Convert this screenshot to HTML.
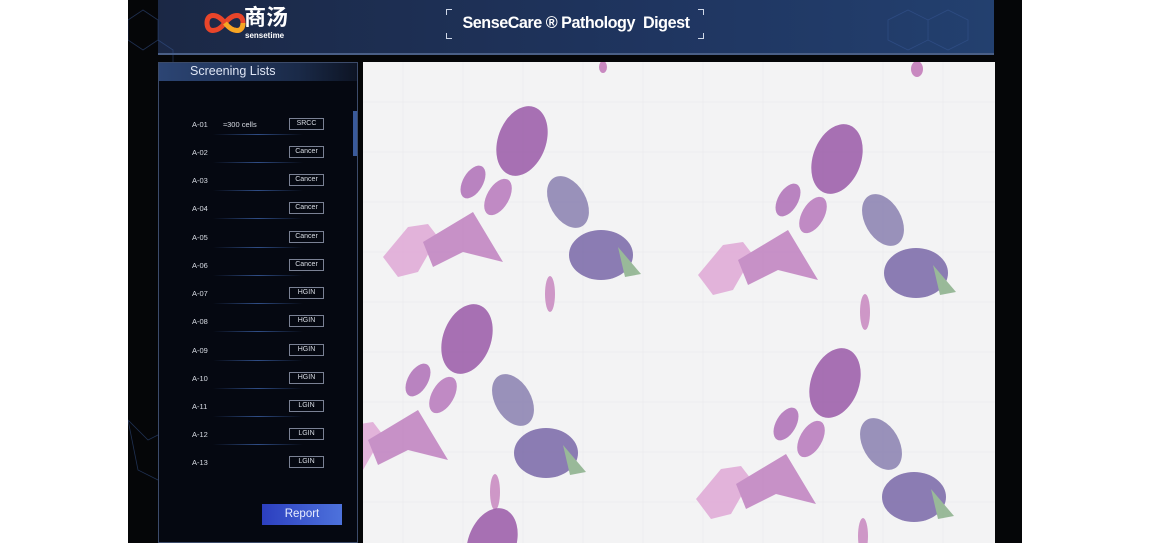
<!DOCTYPE html>
<html><head><meta charset="utf-8"><style>
*{margin:0;padding:0;box-sizing:border-box}
html,body{width:1150px;height:543px;overflow:hidden}
body{background:#fff;position:relative;font-family:"Liberation Sans",sans-serif}
.frame{position:absolute;left:128px;top:0;width:894px;height:543px;background:#050608}
.hdr{position:absolute;left:158px;top:0;width:836px;height:55px;background:linear-gradient(90deg,#1b2845,#1f3560 60%,#23406f);border-bottom:2px solid #4a5f86}
.title{position:absolute;left:448px;top:8px;width:256px;height:30px;color:#fff;font-weight:bold;font-size:17px;text-align:center;line-height:30px;letter-spacing:-0.5px;transform:scaleX(0.95)}
.br{position:absolute;width:6px;height:6px;border-color:#cfd8e8;border-style:solid}
.panel{position:absolute;left:158px;top:62px;width:200px;height:481px;background:#050811;border:1px solid #3c4b6a}
.ph{position:absolute;left:0;top:0;width:198px;height:18px;background:linear-gradient(90deg,#2c4574,#1a2a48 70%,#0d1424)}
.ph span{position:absolute;left:31px;top:1px;color:#dfe6f5;font-size:12.5px}
.row{position:absolute;left:0;width:200px;height:20px;color:#d8dce4;font-size:7.5px}
.row .id{position:absolute;left:34px;top:2px}
.row .c{position:absolute;left:65px;top:2px}
.row .t{position:absolute;left:131px;top:0;width:35px;height:12px;border:1px solid #7a8194;text-align:center;line-height:10px;font-size:7px}
.row .ln{position:absolute;left:55px;top:16px;width:90px;height:1px;background:linear-gradient(90deg,transparent,#2f4d86,transparent)}
.btn{position:absolute;left:262px;top:504px;width:80px;height:21px;background:linear-gradient(90deg,#2c3fbf,#4d72dc);color:#e8eeff;font-size:11.5px;text-align:center;line-height:21px}
.img{position:absolute;left:363px;top:62px;width:632px;height:481px;background:#f3f3f4;overflow:hidden}
</style></head><body>
<div class="frame"></div>
<div class="hdr"></div>
<svg style="position:absolute;left:128px;top:0" width="894" height="543">
<g stroke="#3a5a9a" stroke-width="0.8" fill="none" opacity="0.5">
<path d="M0 20 L15 10 L30 20 L30 40 L15 50 L0 40Z M30 40 L45 50 L45 70"/>
<path d="M760 20 L780 10 L800 20 L800 40 L780 50 L760 40Z M800 40 L820 50 L840 40 L840 20 L820 10 L800 20"/>
<path d="M0 420 L20 440 L40 430 L50 460 L30 480 L10 470Z"/>
</g>
</svg>
<div style="position:absolute;left:203px;top:9px">
<svg width="44" height="28"><path d="M4 14 C4 4,14 4,22 14 C30 24,40 24,40 14 C40 4,30 4,22 14 C14 24,4 24,4 14Z" fill="none" stroke="#e8452a" stroke-width="5"/><path d="M22 14 C30 24,40 24,40 14" fill="none" stroke="#f6a623" stroke-width="5"/></svg>
</div>
<div style="position:absolute;left:244px;top:6px;color:#fff;font-size:22px;font-weight:bold;font-family:'Liberation Sans','Noto Sans CJK SC',sans-serif;line-height:24px">商汤</div>
<div style="position:absolute;left:245px;top:31px;color:#fff;font-size:8px;font-weight:bold">sensetime</div>
<div class="title">SenseCare ® Pathology&nbsp; Digest</div>
<div class="br" style="left:446px;top:9px;border-width:1px 0 0 1px"></div>
<div class="br" style="left:446px;top:33px;border-width:0 0 1px 1px"></div>
<div class="br" style="left:698px;top:9px;border-width:1px 1px 0 0"></div>
<div class="br" style="left:698px;top:33px;border-width:0 1px 1px 0"></div>
<div class="panel"><div class="ph"><span>Screening Lists</span></div>
<div style="position:absolute;left:194px;top:48px;width:4px;height:45px;background:#3a5a9a"></div>
</div>
<div style="position:absolute;left:158px;top:112px;width:200px;height:380px">
<div class="row" style="top:6px"><span class="id">A-01</span><span class="c">≈300 cells</span><span class="t">SRCC</span><span class="ln"></span></div>
<div class="row" style="top:34px"><span class="id">A-02</span><span class="t">Cancer</span><span class="ln"></span></div>
<div class="row" style="top:62px"><span class="id">A-03</span><span class="t">Cancer</span><span class="ln"></span></div>
<div class="row" style="top:90px"><span class="id">A-04</span><span class="t">Cancer</span><span class="ln"></span></div>
<div class="row" style="top:119px"><span class="id">A-05</span><span class="t">Cancer</span><span class="ln"></span></div>
<div class="row" style="top:147px"><span class="id">A-06</span><span class="t">Cancer</span><span class="ln"></span></div>
<div class="row" style="top:175px"><span class="id">A-07</span><span class="t">HGIN</span><span class="ln"></span></div>
<div class="row" style="top:203px"><span class="id">A-08</span><span class="t">HGIN</span><span class="ln"></span></div>
<div class="row" style="top:232px"><span class="id">A-09</span><span class="t">HGIN</span><span class="ln"></span></div>
<div class="row" style="top:260px"><span class="id">A-10</span><span class="t">HGIN</span><span class="ln"></span></div>
<div class="row" style="top:288px"><span class="id">A-11</span><span class="t">LGIN</span><span class="ln"></span></div>
<div class="row" style="top:316px"><span class="id">A-12</span><span class="t">LGIN</span><span class="ln"></span></div>
<div class="row" style="top:344px"><span class="id">A-13</span><span class="t">LGIN</span></div>
</div>
<div class="btn">Report</div>
<div class="img">
<svg width="632" height="481" style="display:block">
<defs>
<g id="t" opacity="0.85">
<ellipse cx="159" cy="79" rx="24" ry="36" transform="rotate(20 159 79)" fill="#9a5aa8"/>
<ellipse cx="110" cy="120" rx="10" ry="18" transform="rotate(30 110 120)" fill="#b070b8"/>
<ellipse cx="135" cy="135" rx="11" ry="20" transform="rotate(30 135 135)" fill="#b878bc"/>
<path d="M20 195 L45 165 L65 162 L75 175 L55 210 L35 215Z" fill="#e0a8d6"/>
<path d="M60 180 L110 150 L140 200 L100 190 L70 205Z" fill="#c080c0"/>
<ellipse cx="205" cy="140" rx="18" ry="28" transform="rotate(-30 205 140)" fill="#8a80b0"/>
<ellipse cx="238" cy="193" rx="32" ry="25" fill="#7a68a8"/>
<path d="M255 185 L278 212 L262 215Z" fill="#8ab08a"/>
<ellipse cx="187" cy="232" rx="5" ry="18" fill="#c888c0"/>
</g>
</defs>
<g stroke="#e8e9ec" stroke-width="0.6"><path d="M0 40H632M0 90H632M0 140H632M0 190H632M0 240H632M0 290H632M0 340H632M0 390H632M0 440H632M40 0V481M100 0V481M160 0V481M220 0V481M280 0V481M340 0V481M400 0V481M460 0V481M520 0V481M580 0V481"/></g>
<use href="#t" x="0" y="0"/>
<use href="#t" x="315" y="18"/>
<use href="#t" x="-55" y="198"/>
<use href="#t" x="313" y="242"/>
<use href="#t" x="-30" y="402"/>
<ellipse cx="240" cy="5" rx="4" ry="6" fill="#c888c0"/>
<ellipse cx="554" cy="7" rx="6" ry="8" fill="#c888c0"/>
</svg>
</div>
</body></html>
